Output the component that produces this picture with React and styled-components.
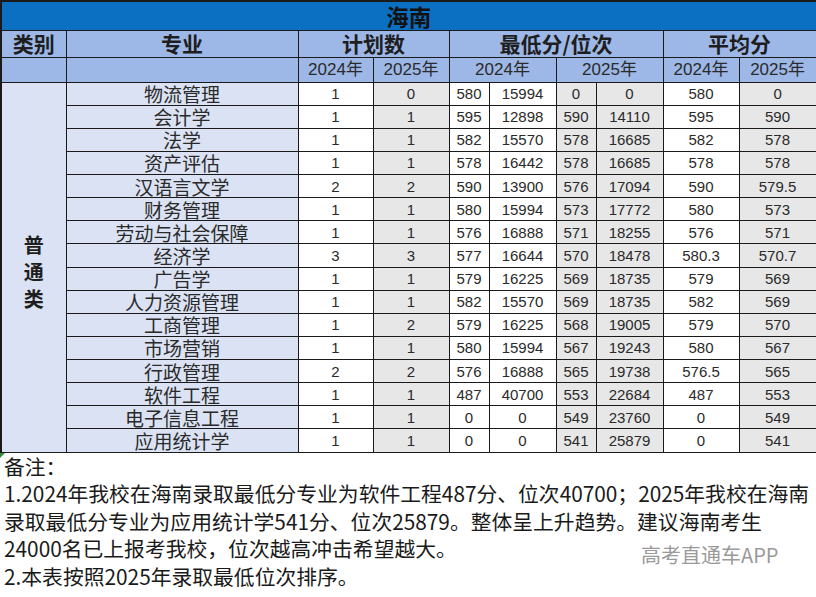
import styled, { createGlobalStyle } from "styled-components";

const GlobalStyle = createGlobalStyle`
  html, body {
    margin: 0;
    padding: 0;
    background: #ffffff;
  }
  body {
    width: 816px;
    height: 597px;
    overflow: hidden;
  }
`;

const Page = styled.div`
  position: relative;
  width: 816px;
  height: 597px;
  background: #fff;
  font-family: "Noto Sans CJK SC", sans-serif;
  color: #1c1c1c;
`;

const Table = styled.table`
  border-collapse: collapse;
  table-layout: fixed;
  width: 815px;
  border-left: 2px solid #1a1a1a;
  border-top: 2px solid #1a1a1a;
`;

const Cell = styled.td`
  border: 1px solid #1a1a1a;
  padding: 0;
  text-align: center;
  vertical-align: middle;
  white-space: nowrap;
  line-height: 1;
  background: ${(p) => p.$bg || "#ffffff"};
`;

const TitleCell = styled(Cell)`
  background: #0b70c2;
  color: #111;
  font-weight: 700;
  font-size: 22.5px;
`;

const HeadCell = styled(Cell)`
  background: #9db7e6;
  font-weight: 700;
  font-size: 21px;
  color: #1e1e1e;
`;

const YearCell = styled(Cell)`
  background: #9db7e6;
  font-family: "Liberation Sans", "Noto Sans CJK SC", sans-serif;
  font-size: 17px;
  color: #2a2a2a;
`;

const CategoryCell = styled(Cell)`
  background: #dae2f3;
  font-weight: 700;
  font-size: 20px;
  line-height: 27px;
  white-space: normal;
  color: #1e1e1e;
  padding-top: 8px;
`;

const MajorCell = styled(Cell)`
  background: #dae2f3;
  font-size: 19px;
  color: #2a2a2a;
`;

const NumCell = styled(Cell)`
  font-family: "Liberation Sans", sans-serif;
  font-size: 15px;
  color: #2a2a2a;
`;

const TitleRow = styled.tr`
  height: 29px;
`;

const HeadRow = styled.tr`
  height: 27px;
`;

const YearRow = styled.tr`
  height: 25px;
`;

const DataRow = styled.tr`
  height: 23.125px;
`;

const Notes = styled.div`
  position: relative;
  padding: 0 0 0 4px;
  font-size: 20.8px;
  line-height: 27.5px;
  color: #1a1a1a;
  &::before {
    content: "";
    position: absolute;
    left: 0;
    top: 0;
    border-top: 5px solid #2e8b3a;
    border-right: 5px solid transparent;
  }
`;

const NoteLine = styled.div`
  white-space: nowrap;
`;

const Watermark = styled.div`
  position: absolute;
  left: 641px;
  top: 542px;
  font-family: "Noto Sans CJK SC", sans-serif;
  font-size: 20px;
  line-height: 26px;
  color: #9a9a9a;
`;

const widths = [65, 232, 75, 76, 40, 67, 40, 67, 76, 77];

const rows = [
  ["物流管理", "1", "0", "580", "15994", "0", "0", "580", "0"],
  ["会计学", "1", "1", "595", "12898", "590", "14110", "595", "590"],
  ["法学", "1", "1", "582", "15570", "578", "16685", "582", "578"],
  ["资产评估", "1", "1", "578", "16442", "578", "16685", "578", "578"],
  ["汉语言文学", "2", "2", "590", "13900", "576", "17094", "590", "579.5"],
  ["财务管理", "1", "1", "580", "15994", "573", "17772", "580", "573"],
  ["劳动与社会保障", "1", "1", "576", "16888", "571", "18255", "576", "571"],
  ["经济学", "3", "3", "577", "16644", "570", "18478", "580.3", "570.7"],
  ["广告学", "1", "1", "579", "16225", "569", "18735", "579", "569"],
  ["人力资源管理", "1", "1", "582", "15570", "569", "18735", "582", "569"],
  ["工商管理", "1", "2", "579", "16225", "568", "19005", "579", "570"],
  ["市场营销", "1", "1", "580", "15994", "567", "19243", "580", "567"],
  ["行政管理", "2", "2", "576", "16888", "565", "19738", "576.5", "565"],
  ["软件工程", "1", "1", "487", "40700", "553", "22684", "487", "553"],
  ["电子信息工程", "1", "1", "0", "0", "549", "23760", "0", "549"],
  ["应用统计学", "1", "1", "0", "0", "541", "25879", "0", "541"],
];

// which numeric columns are shaded grey
const grey = [false, true, false, false, true, true, false, true];

const notes = [
  "备注：",
  "1.2024年我校在海南录取最低分专业为软件工程487分、位次40700；2025年我校在海南",
  "录取最低分专业为应用统计学541分、位次25879。整体呈上升趋势。建议海南考生",
  "24000名已上报考我校，位次越高冲击希望越大。",
  "2.本表按照2025年录取最低位次排序。",
];

export default function App() {
  return (
    <Page>
      <GlobalStyle />
      <Table>
        <colgroup>
          {widths.map((w, i) => (
            <col key={i} style={{ width: w }} />
          ))}
        </colgroup>
        <tbody>
          <TitleRow>
            <TitleCell colSpan={10}>海南</TitleCell>
          </TitleRow>
          <HeadRow>
            <HeadCell>类别</HeadCell>
            <HeadCell>专业</HeadCell>
            <HeadCell colSpan={2}>计划数</HeadCell>
            <HeadCell colSpan={4}>最低分/位次</HeadCell>
            <HeadCell colSpan={2}>平均分</HeadCell>
          </HeadRow>
          <YearRow>
            <YearCell />
            <YearCell />
            <YearCell>2024年</YearCell>
            <YearCell>2025年</YearCell>
            <YearCell colSpan={2}>2024年</YearCell>
            <YearCell colSpan={2}>2025年</YearCell>
            <YearCell>2024年</YearCell>
            <YearCell>2025年</YearCell>
          </YearRow>
          {rows.map((r, i) => (
            <DataRow key={i}>
              {i === 0 && (
                <CategoryCell rowSpan={rows.length}>
                  普<br />通<br />类
                </CategoryCell>
              )}
              <MajorCell>{r[0]}</MajorCell>
              {r.slice(1).map((v, j) => (
                <NumCell key={j} $bg={grey[j] ? "#e7e7e7" : "#ffffff"}>
                  {v}
                </NumCell>
              ))}
            </DataRow>
          ))}
        </tbody>
      </Table>
      <Notes>
        {notes.map((n, i) => (
          <NoteLine key={i}>{n}</NoteLine>
        ))}
      </Notes>
      <Watermark>高考直通车APP</Watermark>
    </Page>
  );
}
